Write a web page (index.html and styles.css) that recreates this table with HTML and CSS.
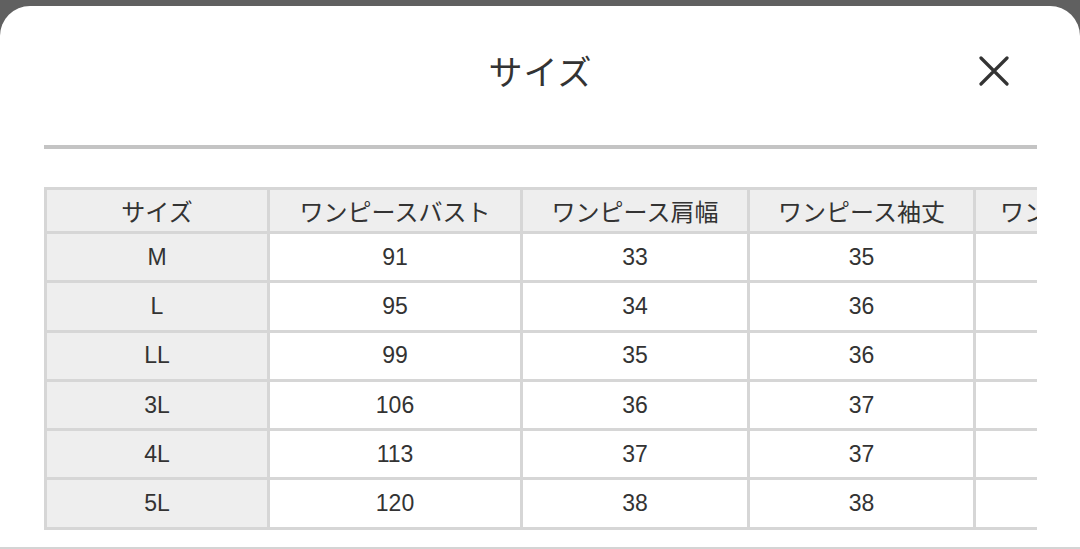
FILE: index.html
```html
<!DOCTYPE html>
<html lang="ja">
<head>
<meta charset="utf-8">
<link rel="stylesheet" href="styles.css">
</head>
<body>
<div class="card">
  <header class="head">
    <h1 class="title">サイズ</h1>
    <button class="close" aria-label="閉じる">
      <svg width="30" height="30" viewBox="0 0 30 30"><path d="M2 2 L28 28 M28 2 L2 28" stroke="#333" stroke-width="3.2" stroke-linecap="round"/></svg>
    </button>
  </header>
  <div class="rule"></div>
  <div class="tablewrap">
    <table class="sizes">
      <colgroup>
        <col class="c1"><col class="c2"><col class="c3"><col class="c4"><col class="c5">
      </colgroup>
      <thead>
        <tr><th>サイズ</th><th>ワンピースバスト</th><th>ワンピース肩幅</th><th>ワンピース袖丈</th><th class="last">ワンピース着丈</th></tr>
      </thead>
      <tbody>
        <tr><th>M</th><td>91</td><td>33</td><td>35</td><td class="last"></td></tr>
        <tr><th>L</th><td>95</td><td>34</td><td>36</td><td class="last"></td></tr>
        <tr><th>LL</th><td>99</td><td>35</td><td>36</td><td class="last"></td></tr>
        <tr><th>3L</th><td>106</td><td>36</td><td>37</td><td class="last"></td></tr>
        <tr><th>4L</th><td>113</td><td>37</td><td>37</td><td class="last"></td></tr>
        <tr><th>5L</th><td>120</td><td>38</td><td>38</td><td class="last"></td></tr>
      </tbody>
    </table>
  </div>
</div>
</body>
</html>
```

FILE: styles.css
```css
html, body {
  margin: 0;
  padding: 0;
  height: 100%;
}
body {
  background: #606060;
  font-family: "Liberation Sans", "Noto Sans CJK JP", sans-serif;
  color: #333;
  overflow: hidden;
}
.card {
  margin-top: 6px;
  height: 541px;
  background: #fff;
  border-radius: 30px 30px 0 0;
  border-bottom: 2px solid #d4d4d4;
  padding: 0 43px 0 44px;
}
.head {
  height: 139px;
  display: flex;
  align-items: center;
  justify-content: center;
  position: relative;
}
.title {
  margin: 0 0 10px 0;
  font-family: "Noto Sans CJK JP", sans-serif;
  font-weight: 400;
  font-size: 34px;
  color: #333;
  letter-spacing: 1px;
}
.close {
  position: absolute;
  right: 28px;
  top: 50px;
  width: 30px;
  height: 30px;
  padding: 0;
  border: 0;
  background: none;
  display: flex;
}
.rule {
  height: 4px;
  background: #c4c4c4;
}
.tablewrap {
  margin-top: 38px;
  overflow: hidden;
}
.sizes {
  border-collapse: collapse;
  table-layout: fixed;
  width: 1160px;
  font-size: 23px;
}
.c1 { width: 223px; }
.c2 { width: 253px; }
.c3 { width: 227px; }
.c4 { width: 226px; }
.c5 { width: 231px; }
.sizes th, .sizes td {
  border: 3px solid #d6d6d6;
  text-align: center;
  font-weight: 400;
  color: #333;
  padding: 0;
  white-space: nowrap;
  overflow: hidden;
}
.sizes thead th {
  background: #eeeeee;
  height: 41px;
  font-family: "Noto Sans CJK JP", sans-serif;
  font-size: 24px;
}
.sizes thead th.last {
  text-align: left;
  padding-left: 24px;
}
.sizes tbody th {
  background: #eeeeee;
}
.sizes tbody th, .sizes tbody td {
  height: 46.3px;
}
```
